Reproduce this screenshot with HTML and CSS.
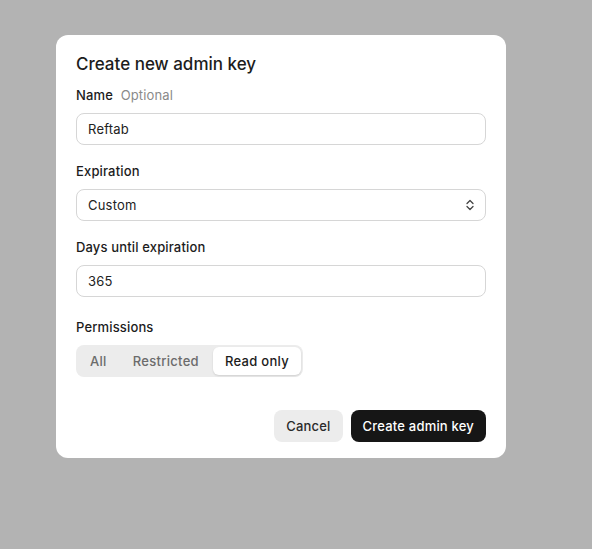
FILE: index.html
```html
<!DOCTYPE html>
<html>
<head>
<meta charset="utf-8">
<link rel="stylesheet" href="styles.css">
</head>
<body>
<div class="modal">
  <h2 class="title">Create new admin key</h2>
  <div class="field">
    <div class="label">Name <span class="optional">Optional</span></div>
    <div class="input">Reftab</div>
  </div>
  <div class="field">
    <div class="label">Expiration</div>
    <div class="input select">
      <span>Custom</span>
      <svg class="chev" width="10" height="14" viewBox="0 0 10 14"><path d="M2 5.5 L5 2.5 L8 5.5 M2 8.5 L5 11.5 L8 8.5" fill="none" stroke="#444" stroke-width="1.3" stroke-linecap="round" stroke-linejoin="round"/></svg>
    </div>
  </div>
  <div class="field">
    <div class="label">Days until expiration</div>
    <div class="input">365</div>
  </div>
  <div class="field perms">
    <div class="label">Permissions</div>
    <div class="segmented">
      <div class="seg">All</div>
      <div class="seg">Restricted</div>
      <div class="seg active">Read only</div>
    </div>
  </div>
  <div class="actions">
    <button class="btn secondary">Cancel</button>
    <button class="btn primary">Create admin key</button>
  </div>
</div>
</body>
</html>
```
FILE: styles.css
```css
html, body {
  margin: 0;
  height: 100%;
}
body {
  background: #b3b3b3;
  font-family: Inter, "Noto Sans", sans-serif;
  color: #1c1c1c;
  padding: 35px 0 0 56px;
  box-sizing: border-box;
}
.modal {
  width: 450px;
  box-sizing: border-box;
  background: #fff;
  border-radius: 12px;
  padding: 18px 20px 16px;
}
.title {
  margin: 0 0 10px;
  font-size: 17px;
  font-weight: 500;
  line-height: 22px;
  letter-spacing: 0;
}
.field {
  display: flex;
  flex-direction: column;
  gap: 8px;
  margin-bottom: 16px;
}
.field.perms {
  margin-top: 20px;
  margin-bottom: 33px;
}
.label {
  font-size: 13px;
  font-weight: 500;
  line-height: 20px;
  letter-spacing: 0.15px;
}
.optional {
  color: #8a8a8a;
  font-weight: 400;
  margin-left: 4px;
}
.input {
  height: 32px;
  box-sizing: border-box;
  border: 1px solid #d6d6d6;
  border-radius: 8px;
  padding: 0 11px;
  display: flex;
  align-items: center;
  font-size: 13px;
  letter-spacing: 0.2px;
  color: #222;
}
.select {
  justify-content: space-between;
  padding-right: 10px;
}
.segmented {
  align-self: flex-start;
  display: flex;
  gap: 2px;
  background: #ececec;
  border-radius: 8px;
  padding: 2px;
  height: 32px;
  box-sizing: border-box;
}
.seg {
  display: flex;
  align-items: center;
  padding: 0 12px;
  font-size: 13px;
  font-weight: 500;
  letter-spacing: 0.3px;
  color: #6b6b6b;
  border-radius: 6px;
}
.seg.active {
  background: #fff;
  color: #1c1c1c;
  box-shadow: 0 1px 2px rgba(0,0,0,0.12);
}
.actions {
  display: flex;
  justify-content: flex-end;
  gap: 8px;
}
.btn {
  height: 32px;
  border: none;
  border-radius: 8px;
  padding: 0 12px;
  font-family: inherit;
  font-size: 13px;
  font-weight: 500;
  letter-spacing: 0.2px;
}
.secondary {
  background: #ececec;
  color: #2a2a2a;
}
.primary {
  background: #161616;
  color: #fff;
}
```
